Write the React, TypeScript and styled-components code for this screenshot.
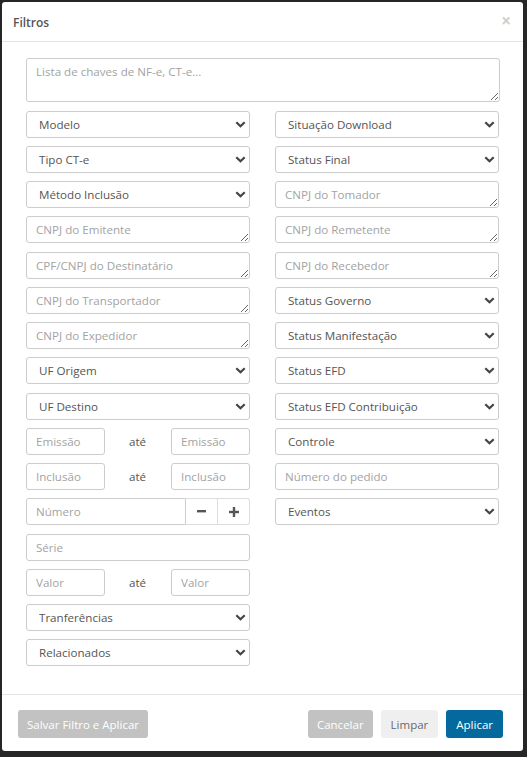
import React from "react";
import styled, { createGlobalStyle } from "styled-components";

const Global = createGlobalStyle`
  html, body { margin: 0; padding: 0; }
  body {
    background: #262626;
    font-family: "Open Sans", "Noto Sans", sans-serif;
    font-size: 12px;
    color: #555;
  }
  * { box-sizing: border-box; }
  ::placeholder { color: #a3a3a3; opacity: 1; }
`;

const Page = styled.div`
  padding: 2px 4px 5px 2px;
`;

const Modal = styled.div`
  width: 521px;
  background: #fff;
  border-radius: 3px;
  display: flex;
  flex-direction: column;
`;

const Header = styled.div`
  height: 40px;
  display: flex;
  align-items: center;
  justify-content: space-between;
  padding: 0 12px 0 11px;
  border-bottom: 1px solid #e5e5e5;
`;

const Title = styled.div`
  font-size: 12px;
  font-weight: 600;
  color: #555;
  margin-top: 1px;
`;

const Close = styled.span`
  font-size: 17px;
  line-height: 1;
  color: #cfcfcf;
  font-weight: 700;
  margin-top: -2px;
`;

const Body = styled.div`
  padding: 16px 23px 28px 24px;
`;

const Keys = styled.textarea`
  display: block;
  width: 100%;
  height: 44px;
  border: 1px solid #ccc;
  border-radius: 3px;
  padding: 5px 9px;
  font-family: inherit;
  font-size: 11.6px;
  color: #555;
  resize: vertical;
  margin-bottom: 8.5px;
  outline: none;
`;

const Columns = styled.div`
  display: grid;
  grid-template-columns: 224px 224px;
  column-gap: 25px;
`;

const Column = styled.div`
  display: flex;
  flex-direction: column;
  gap: 8.27px;
`;

const SelectWrap = styled.div`
  position: relative;
  height: 27px;
`;

const Select = styled.select`
  width: 100%;
  height: 27px;
  appearance: none;
  -webkit-appearance: none;
  border: 1px solid #ccc;
  border-radius: 3px;
  background: #fff;
  padding: 0 24px 0 12px;
  font-family: inherit;
  font-size: 11.6px;
  color: #555;
  outline: none;
`;

const Chevron = styled.svg`
  position: absolute;
  right: 4px;
  top: 10px;
  width: 11px;
  height: 7px;
  pointer-events: none;
`;

const Area = styled.textarea`
  display: block;
  width: 100%;
  height: 27px;
  min-height: 27px;
  border: 1px solid #ccc;
  border-radius: 3px;
  padding: 5px 9px 0;
  font-family: inherit;
  font-size: 11.6px;
  line-height: 16px;
  color: #555;
  resize: vertical;
  overflow: hidden;
  outline: none;
`;

const Input = styled.input<{ $flat?: boolean }>`
  display: block;
  width: 100%;
  min-width: 0;
  height: 27px;
  border: 1px solid #ccc;
  border-radius: ${(p) => (p.$flat ? "3px 0 0 3px" : "3px")};
  padding: 0 9px;
  font-family: inherit;
  font-size: 11.6px;
  color: #555;
  outline: none;
`;

const RangeRow = styled.div`
  display: grid;
  grid-template-columns: 79px 1fr 79px;
  align-items: center;
  height: 27px;
`;

const Ate = styled.span`
  text-align: center;
  color: #555;
  font-size: 11.6px;
  padding-right: 1px;
`;

const Group = styled.div`
  display: flex;
  height: 27px;
`;

const StepBtn = styled.button<{ $last?: boolean }>`
  flex: 0 0 32px;
  height: 27px;
  border: 1px solid #ddd;
  border-left: none;
  border-radius: ${(p) => (p.$last ? "0 3px 3px 0" : "0")};
  background: #fff;
  display: flex;
  align-items: center;
  justify-content: center;
  padding: 0;
`;

const Footer = styled.div`
  border-top: 1px solid #e5e5e5;
  padding: 15px 20px 13px 16px;
  display: flex;
  align-items: center;
`;

const Spacer = styled.div`
  flex: 1;
`;

const Btn = styled.button<{ $kind: "gray" | "light" | "primary" }>`
  height: 28px;
  border: none;
  border-radius: 3px;
  padding: 0 ${(p) => (p.$kind === "gray" ? "9px" : "10px")};
  font-family: inherit;
  font-size: 11.5px;
  color: ${(p) => (p.$kind === "light" ? "#6a6a6a" : "#fff")};
  background: ${(p) =>
    p.$kind === "gray" ? "#c2c2c2" : p.$kind === "light" ? "#efefef" : "#046a9e"};
  & + & {
    margin-left: 8px;
  }
`;

const ChevronIcon = () => (
  <Chevron viewBox="0 0 11 7">
    <path d="M1.3 1.2 L5.5 5.2 L9.7 1.2" fill="none" stroke="#444" strokeWidth="2.2" />
  </Chevron>
);

const Sel = ({ label }: { label: string }) => (
  <SelectWrap>
    <Select defaultValue="">
      <option value="">{label}</option>
    </Select>
    <ChevronIcon />
  </SelectWrap>
);

const Ta = ({ ph }: { ph: string }) => <Area placeholder={ph} rows={1} />;

const Range = ({ ph }: { ph: string }) => (
  <RangeRow>
    <Input placeholder={ph} />
    <Ate>até</Ate>
    <Input placeholder={ph} />
  </RangeRow>
);

export default function App() {
  return (
    <Page>
      <Global />
      <Modal>
        <Header>
          <Title>Filtros</Title>
          <Close>×</Close>
        </Header>
        <Body>
          <Keys placeholder="Lista de chaves de NF-e, CT-e..." />
          <Columns>
            <Column>
              <Sel label="Modelo" />
              <Sel label="Tipo CT-e" />
              <Sel label="Método Inclusão" />
              <Ta ph="CNPJ do Emitente" />
              <Ta ph="CPF/CNPJ do Destinatário" />
              <Ta ph="CNPJ do Transportador" />
              <Ta ph="CNPJ do Expedidor" />
              <Sel label="UF Origem" />
              <Sel label="UF Destino" />
              <Range ph="Emissão" />
              <Range ph="Inclusão" />
              <Group>
                <Input $flat placeholder="Número" />
                <StepBtn>
                  <svg width="9" height="3" viewBox="0 0 9 3">
                    <rect x="0" y="0" width="9" height="2.4" fill="#555" />
                  </svg>
                </StepBtn>
                <StepBtn $last>
                  <svg width="10" height="10" viewBox="0 0 10 10">
                    <rect x="0" y="3.8" width="10" height="2.4" fill="#555" />
                    <rect x="3.8" y="0" width="2.4" height="10" fill="#555" />
                  </svg>
                </StepBtn>
              </Group>
              <Input placeholder="Série" />
              <Range ph="Valor" />
              <Sel label="Tranferências" />
              <Sel label="Relacionados" />
            </Column>
            <Column>
              <Sel label="Situação Download" />
              <Sel label="Status Final" />
              <Ta ph="CNPJ do Tomador" />
              <Ta ph="CNPJ do Remetente" />
              <Ta ph="CNPJ do Recebedor" />
              <Sel label="Status Governo" />
              <Sel label="Status Manifestação" />
              <Sel label="Status EFD" />
              <Sel label="Status EFD Contribuição" />
              <Sel label="Controle" />
              <Input placeholder="Número do pedido" />
              <Sel label="Eventos" />
            </Column>
          </Columns>
        </Body>
        <Footer>
          <Btn $kind="gray">Salvar Filtro e Aplicar</Btn>
          <Spacer />
          <Btn $kind="gray">Cancelar</Btn>
          <Btn $kind="light">Limpar</Btn>
          <Btn $kind="primary">Aplicar</Btn>
        </Footer>
      </Modal>
    </Page>
  );
}
